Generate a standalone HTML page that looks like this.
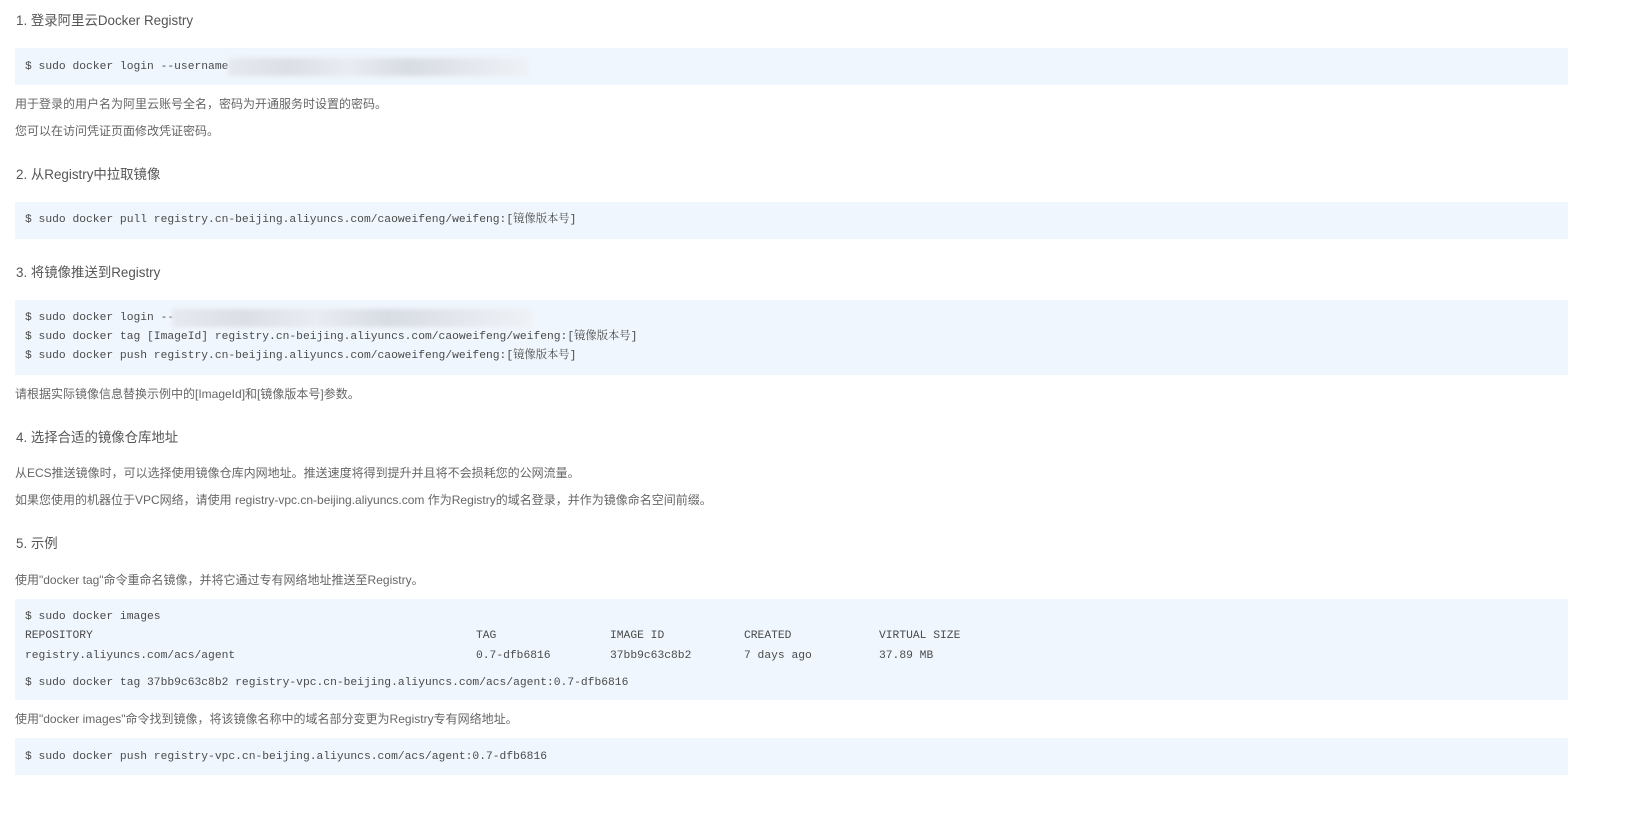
<!DOCTYPE html>
<html><head><meta charset="utf-8"><style>
body{margin:0;width:1632px;height:830px;background:#fff;position:relative;overflow:hidden;font-family:"Liberation Sans","Noto Sans CJK SC",sans-serif;}
.h{position:absolute;left:16px;font-size:13.4px;color:#555;line-height:20px;}
.p{position:absolute;left:15px;font-size:12px;color:#666;line-height:16px;}
.b{position:absolute;left:15px;width:1553px;background:#f0f6fd;}
.c{position:absolute;left:25px;font-family:"Liberation Mono","Noto Serif CJK SC",monospace;font-size:11.3px;color:#4a4a4a;line-height:16px;white-space:pre;}
.blur{position:absolute;height:18px;background:linear-gradient(90deg,#e6e9ef,#dcdfe6 20%,#e9ecf2 40%,#d8dce3 60%,#e4e7ed 80%,#eef2f7);filter:blur(2px);}
</style></head><body>
<div class="h" style="top:11px">1. 登录阿里云Docker Registry</div>
<div class="b" style="top:48px;height:37px"></div>
<div class="c" style="top:59px">$ sudo docker login --username</div>
<div class="blur" style="left:228px;top:58px;width:300px"></div>
<div class="p" style="top:96px">用于登录的用户名为阿里云账号全名，密码为开通服务时设置的密码。</div>
<div class="p" style="top:123px">您可以在访问凭证页面修改凭证密码。</div>
<div class="h" style="top:165px">2. 从Registry中拉取镜像</div>
<div class="b" style="top:202px;height:37px"></div>
<div class="c" style="top:212px">$ sudo docker pull registry.cn-beijing.aliyuncs.com/caoweifeng/weifeng:[镜像版本号]</div>
<div class="h" style="top:263px">3. 将镜像推送到Registry</div>
<div class="b" style="top:300px;height:75px"></div>
<div class="c" style="top:310px">$ sudo docker login --</div>
<div class="blur" style="left:172px;top:309px;width:360px"></div>
<div class="c" style="top:329px">$ sudo docker tag [ImageId] registry.cn-beijing.aliyuncs.com/caoweifeng/weifeng:[镜像版本号]</div>
<div class="c" style="top:348px">$ sudo docker push registry.cn-beijing.aliyuncs.com/caoweifeng/weifeng:[镜像版本号]</div>
<div class="p" style="top:386px">请根据实际镜像信息替换示例中的[ImageId]和[镜像版本号]参数。</div>
<div class="h" style="top:428px">4. 选择合适的镜像仓库地址</div>
<div class="p" style="top:465px">从ECS推送镜像时，可以选择使用镜像仓库内网地址。推送速度将得到提升并且将不会损耗您的公网流量。</div>
<div class="p" style="top:492px">如果您使用的机器位于VPC网络，请使用 registry-vpc.cn-beijing.aliyuncs.com 作为Registry的域名登录，并作为镜像命名空间前缀。</div>
<div class="h" style="top:534px">5. 示例</div>
<div class="p" style="top:572px">使用"docker tag"命令重命名镜像，并将它通过专有网络地址推送至Registry。</div>
<div class="b" style="top:599px;height:101px"></div>
<div class="c" style="top:609px">$ sudo docker images</div>
<div class="c" style="top:628px">REPOSITORY</div>
<div class="c" style="top:628px;left:476px">TAG</div>
<div class="c" style="top:628px;left:610px">IMAGE ID</div>
<div class="c" style="top:628px;left:744px">CREATED</div>
<div class="c" style="top:628px;left:879px">VIRTUAL SIZE</div>
<div class="c" style="top:648px">registry.aliyuncs.com/acs/agent</div>
<div class="c" style="top:648px;left:476px">0.7-dfb6816</div>
<div class="c" style="top:648px;left:610px">37bb9c63c8b2</div>
<div class="c" style="top:648px;left:744px">7 days ago</div>
<div class="c" style="top:648px;left:879px">37.89 MB</div>
<div class="c" style="top:675px">$ sudo docker tag 37bb9c63c8b2 registry-vpc.cn-beijing.aliyuncs.com/acs/agent:0.7-dfb6816</div>
<div class="p" style="top:711px">使用"docker images"命令找到镜像，将该镜像名称中的域名部分变更为Registry专有网络地址。</div>
<div class="b" style="top:738px;height:37px"></div>
<div class="c" style="top:749px">$ sudo docker push registry-vpc.cn-beijing.aliyuncs.com/acs/agent:0.7-dfb6816</div>
</body></html>
